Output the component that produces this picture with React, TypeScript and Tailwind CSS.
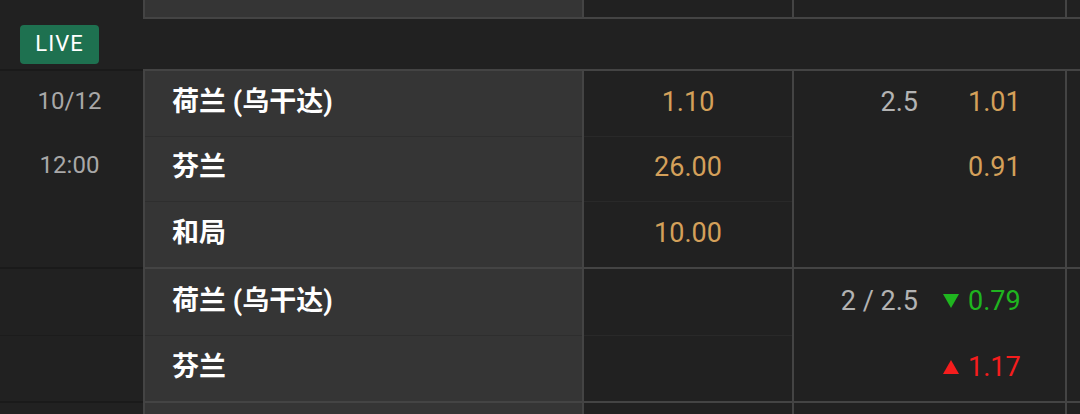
import React from "react";

const B = "border-[#444444]";

function Tri({ dir }: { dir: "up" | "down" }) {
  return (
    <svg width="16" height="14" viewBox="0 0 16 14" className="block">
      {dir === "down" ? (
        <polygon points="0,0 16,0 8,14" fill="#1fb51f" />
      ) : (
        <polygon points="8,0 16,14 0,14" fill="#f51d1d" />
      )}
    </svg>
  );
}

type Sub = { team: string; odd?: string; line?: string; hodd?: string; tri?: "up" | "down"; left?: string };

function Match({ subs, leftSep, heights, pad }: { subs: Sub[]; leftSep: boolean; heights: string[]; pad: string }) {
  return (
    <div className="flex">
      {/* left column */}
      <div className="w-[143px] shrink-0 border-t-2 border-[#1a1a1a] bg-[#212121]">
        {leftSep ? (
          subs.map((s, i) => (
            <div key={i} className={`${heights[i]} ${i > 0 ? "border-t border-[#1c1c1c]" : ""}`} />
          ))
        ) : (
          <div className="-mt-[2px] flex flex-col items-center pr-[4px] text-[24px] leading-[64px] text-[#a8a8a8]">
            {subs
              .filter((s) => s.left)
              .map((s, i) => (
                <div key={i}>{s.left}</div>
              ))}
            <div className="h-[68px]" />
          </div>
        )}
      </div>
      {/* team column */}
      <div className={`w-[439px] shrink-0 border-l-2 border-t-2 ${B} bg-[#353535]`}>
        {subs.map((s, i) => (
          <div
            key={i}
            className={`flex ${heights[i]} items-center ${pad} pl-[27px] text-[27px] font-bold text-white ${
              i > 0 ? "border-t border-[#2e2e2e]" : ""
            }`}
          >
            {s.team}
          </div>
        ))}
      </div>
      {/* 1x2 column */}
      <div className={`w-[210px] shrink-0 border-l-2 border-t-2 ${B} bg-[#212121]`}>
        {subs.map((s, i) => (
          <div
            key={i}
            className={`flex ${heights[i]} items-center justify-center ${pad} text-[27px] text-[#d4a05a] ${
              i > 0 ? "border-t border-[#292929]" : ""
            }`}
          >
            {s.odd ?? ""}
          </div>
        ))}
      </div>
      {/* handicap column */}
      <div className={`w-[273px] shrink-0 border-l-2 border-t-2 ${B} bg-[#212121]`}>
        {subs.map((s, i) => (
          <div key={i} className={`flex ${heights[i]} items-center ${pad} text-[27px]`}>
            <div className="w-[124px] text-right text-[#b3b3b3]">{s.line ?? ""}</div>
            <div className="ml-[25px] flex w-[16px] items-center">{s.tri ? <Tri dir={s.tri} /> : null}</div>
            <div
              className={`ml-[9px] ${
                s.tri === "down" ? "text-[#1fb51f]" : s.tri === "up" ? "text-[#f51d1d]" : "text-[#d4a05a]"
              }`}
            >
              {s.hodd ?? ""}
            </div>
          </div>
        ))}
      </div>
      <div className={`flex-1 border-l-2 border-t-2 ${B} bg-[#212121]`} />
    </div>
  );
}

export default function App() {
  return (
    <div
      className="h-[414px] w-[1080px] overflow-hidden bg-[#212121]"
      style={{ fontFamily: "Roboto, 'Noto Sans CJK SC', sans-serif" }}
    >
      {/* top partial row */}
      <div className="flex h-[19px]">
        <div className="w-[143px] shrink-0 bg-[#212121]" />
        <div className={`w-[439px] shrink-0 border-b-2 border-l-2 ${B} bg-[#353535]`} />
        <div className={`w-[210px] shrink-0 border-b-2 border-l-2 ${B} bg-[#212121]`} />
        <div className={`w-[273px] shrink-0 border-b-2 border-l-2 ${B} bg-[#212121]`} />
        <div className={`flex-1 border-b-2 border-l-2 ${B} bg-[#212121]`} />
      </div>
      {/* LIVE row */}
      <div className="flex h-[50px] items-center bg-[#212121] pl-[20px]">
        <div className="flex h-[39px] w-[79px] items-center justify-center rounded-[4px] bg-[#1e7150] pb-[1px] text-[22px] tracking-[1px] text-white">
          LIVE
        </div>
      </div>
      <Match
        leftSep={false}
        heights={["h-[65px]", "h-[65px]", "h-[66px]"]}
        pad="pb-[3px]"
        subs={[
          { team: "荷兰 (乌干达)", odd: "1.10", line: "2.5", hodd: "1.01", left: "10/12" },
          { team: "芬兰", odd: "26.00", hodd: "0.91", left: "12:00" },
          { team: "和局", odd: "10.00" },
        ]}
      />
      <Match
        leftSep={true}
        heights={["h-[66px]", "h-[66px]"]}
        pad="pb-[2px]"
        subs={[
          { team: "荷兰 (乌干达)", line: "2 / 2.5", hodd: "0.79", tri: "down" },
          { team: "芬兰", hodd: "1.17", tri: "up" },
        ]}
      />
      {/* bottom partial row */}
      <div className="flex h-[20px]">
        <div className="w-[143px] shrink-0 border-t-2 border-[#1a1a1a] bg-[#212121]" />
        <div className={`w-[439px] shrink-0 border-l-2 border-t-2 ${B} bg-[#353535]`} />
        <div className={`w-[210px] shrink-0 border-l-2 border-t-2 ${B} bg-[#212121]`} />
        <div className={`w-[273px] shrink-0 border-l-2 border-t-2 ${B} bg-[#212121]`} />
        <div className={`flex-1 border-l-2 border-t-2 ${B} bg-[#212121]`} />
      </div>
    </div>
  );
}
